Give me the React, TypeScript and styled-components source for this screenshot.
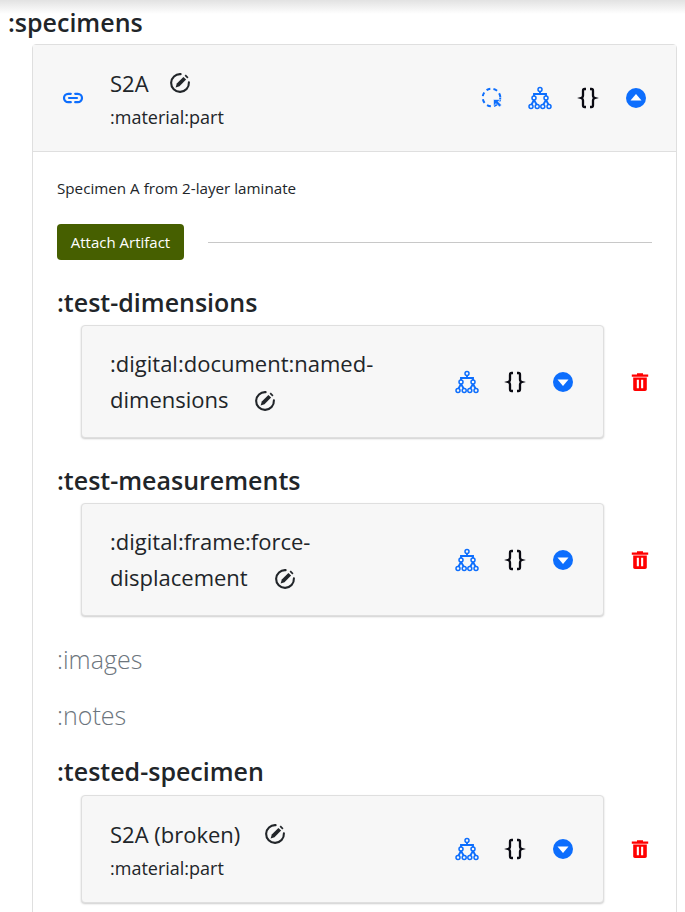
import React from "react"
import styled, { createGlobalStyle } from "styled-components"

const GlobalStyle = createGlobalStyle`
  html, body {
    margin: 0;
    height: 912px;
    overflow: hidden;
    background: #fff;
  }
  body {
    font-family: "Open Sans", "Noto Sans", sans-serif;
    color: #212529;
  }
`

const blue = "#0d6efd"

const PencilCircleIcon = () => (
  <svg width="22" height="22" viewBox="0 0 22 22" fill="none">
    <path d="M11.6 2.1A8.9 8.9 0 1 0 19.9 10.4" stroke="#212529" strokeWidth="2.1" strokeLinecap="round" />
    <path d="M6.6 15.4l1.2-3.9 6.6-6.6 2.7 2.7-6.6 6.6z" fill="#212529" />
    <path d="M15.6 3.7l1.2-1.2 2.7 2.7-1.2 1.2z" fill="#212529" />
  </svg>
)

const LinkIcon = () => (
  <svg width="22" height="22" viewBox="0 0 22 22" fill="none" stroke={blue} strokeWidth="2.2" strokeLinecap="round">
    <path d="M8.8 6.8H6.2a4.2 4.2 0 0 0 0 8.4h2.6" />
    <path d="M13.2 6.8h2.6a4.2 4.2 0 0 1 0 8.4h-2.6" />
    <path d="M7 11h8" />
  </svg>
)

const DashedArrowIcon = () => (
  <svg width="22" height="22" viewBox="0 0 22 22" fill="none">
    <circle cx="10.5" cy="10.5" r="8.8" stroke={blue} strokeWidth="2" strokeDasharray="4 3.2" />
    <path d="M12.5 12.5h7l-2.4 2.1 3.4 3.4-2 2-3.4-3.4-2.6 2.4z" fill={blue} stroke="#f7f7f7" strokeWidth="0.6" />
  </svg>
)

const TreeIcon = () => (
  <svg width="24" height="24" viewBox="0 0 24 24" fill="none" stroke={blue} strokeWidth="1.5">
    <circle cx="12" cy="3.4" r="2" />
    <circle cx="6" cy="12" r="2" />
    <circle cx="18" cy="12" r="2" />
    <circle cx="3" cy="20.4" r="2" />
    <circle cx="9.2" cy="20.4" r="2" />
    <circle cx="14.8" cy="20.4" r="2" />
    <circle cx="21" cy="20.4" r="2" />
    <path d="M12 5.4V8M6 10V8h12v2M6 14l-2.5 4.5M6 14l2.7 4.5M18 14l-2.7 4.5M18 14l2.5 4.5" strokeWidth="1.9" />
  </svg>
)

const BracesIcon = () => (
  <svg width="22" height="22" viewBox="0 0 22 22" fill="none" stroke="#0a0a12" strokeWidth="2.3">
    <path d="M9 2H7.6C6.4 2 6 2.7 6 3.7v4.7c0 1.4-.7 2.2-2 2.6 1.3.4 2 1.2 2 2.6v4.7c0 1 .4 1.7 1.6 1.7H9" />
    <path d="M13 2h1.4c1.2 0 1.6.7 1.6 1.7v4.7c0 1.4.7 2.2 2 2.6-1.3.4-2 1.2-2 2.6v4.7c0 1-.4 1.7-1.6 1.7H13" />
  </svg>
)

const CaretCircleIcon = ({ up }: { up?: boolean }) => (
  <svg width="20" height="20" viewBox="0 0 20 20">
    <circle cx="10" cy="10" r="10" fill={blue} />
    {up ? <path d="M10 6l5.5 6.5h-11z" fill="#fff" /> : <path d="M10 14L4.5 7.5h11z" fill="#fff" />}
  </svg>
)

const TrashIcon = () => (
  <svg width="18" height="18" viewBox="0 0 18 18">
    <path fillRule="evenodd" fill="#ff0000" d="M.8 1.5H6V.2h6v1.3h5.2v2.2H.8zM2.2 4.4h13.6v11.8c0 1-.7 1.7-1.7 1.7H3.9c-1 0-1.7-.7-1.7-1.7zM5.8 6.8v8.4h2.1V6.8zM10.1 6.8v8.4h2.1V6.8z" />
  </svg>
)

const Page = styled.div`
  position: relative;
  padding: 8px 8px 0;
  &::before {
    content: "";
    position: absolute;
    top: 0;
    left: 0;
    right: 0;
    height: 14px;
    background: linear-gradient(#e2e2e2, #ffffff);
  }
`

const PageHeading = styled.h2`
  position: relative;
  margin: 0;
  font-size: 25px;
  line-height: 28px;
  font-weight: 600;
`

const SpecimenCard = styled.section`
  margin: 8px 0 0 24px;
  border: 1px solid #dfdfdf;
  border-radius: 4px 4px 0 0;
`

const SpecimenHeader = styled.header`
  display: flex;
  align-items: center;
  height: 106px;
  padding: 0 28px 0 29px;
  background: #f7f7f7;
  border-bottom: 1px solid #dfdfdf;
`

const LinkSlot = styled.span`
  display: flex;
  margin-right: 26px;
`

const TitleBlock = styled.div`
  flex: 1;
  padding-top: 1px;
`

const TitleLine = styled.div<{ $gap: number }>`
  display: flex;
  align-items: center;
  gap: ${(p) => p.$gap}px;
  font-size: 22px;
  line-height: 30px;
`

const Kind = styled.div`
  margin-top: 7px;
  font-size: 18px;
  line-height: 24px;
`

const Actions = styled.div`
  display: flex;
  align-items: center;
  gap: 24px;
`

const ActionSlot = styled.span`
  display: flex;
  justify-content: center;
  align-items: center;
  width: 24px;
  height: 24px;
`

const SpecimenBody = styled.div`
  padding: 24px 24px 40px;
`

const Description = styled.p`
  margin: 0;
  font-size: 15.2px;
  line-height: 24px;
`

const AttachRow = styled.div`
  display: flex;
  align-items: center;
  gap: 24px;
  margin-top: 24px;
`

const AttachButton = styled.button`
  height: 36px;
  width: 127px;
  padding: 0;
  border: 0;
  border-radius: 4px;
  background: #465f00;
  color: #fff;
  font-family: inherit;
  font-size: 15px;
`

const Rule = styled.div`
  flex: 1;
  height: 1px;
  background: #c8c8c8;
`

const SectionHeading = styled.h3<{ $empty?: boolean }>`
  margin: 0;
  font-size: 25px;
  line-height: 28px;
  font-weight: ${(p) => (p.$empty ? 300 : 600)};
  color: ${(p) => (p.$empty ? "#6c757d" : "#212529")};
`

const Section = styled.div<{ $top: number }>`
  margin-top: ${(p) => p.$top}px;
`

const ArtifactRow = styled.div<{ $gap?: number }>`
  display: flex;
  align-items: center;
  margin: ${(p) => p.$gap ?? 9}px 0 0 24px;
`

const ArtifactCard = styled.div<{ $height: number }>`
  box-sizing: border-box;
  display: flex;
  align-items: center;
  width: 523px;
  height: ${(p) => p.$height}px;
  padding: 0 28px;
  background: #f7f7f7;
  border: 1px solid #dfdfdf;
  border-radius: 4px;
  box-shadow: 0 1px 2px rgba(0, 0, 0, 0.2);
`

const ArtifactTitle = styled.div`
  flex: 1;
  padding: 3px 20px 0 0;
  font-size: 22px;
  line-height: 36px;
`

const InlineEdit = styled.span`
  display: inline-block;
  margin-left: 26px;
  vertical-align: -4px;
`

const DeleteSlot = styled.span`
  display: flex;
  margin-left: 27px;
`

const ArtifactActions = () => (
  <Actions>
    <ActionSlot><TreeIcon /></ActionSlot>
    <ActionSlot><BracesIcon /></ActionSlot>
    <ActionSlot><CaretCircleIcon /></ActionSlot>
  </Actions>
)

export default function App() {
  return (
    <Page>
      <GlobalStyle />
      <PageHeading>:specimens</PageHeading>
      <SpecimenCard>
        <SpecimenHeader>
          <LinkSlot><LinkIcon /></LinkSlot>
          <TitleBlock>
            <TitleLine $gap={20}>S2A <PencilCircleIcon /></TitleLine>
            <Kind>:material:part</Kind>
          </TitleBlock>
          <Actions>
            <ActionSlot><DashedArrowIcon /></ActionSlot>
            <ActionSlot><TreeIcon /></ActionSlot>
            <ActionSlot><BracesIcon /></ActionSlot>
            <ActionSlot><CaretCircleIcon up /></ActionSlot>
          </Actions>
        </SpecimenHeader>
        <SpecimenBody>
          <Description>Specimen A from 2-layer laminate</Description>
          <AttachRow>
            <AttachButton>Attach Artifact</AttachButton>
            <Rule />
          </AttachRow>
          <Section $top={28}>
            <SectionHeading>:test-dimensions</SectionHeading>
            <ArtifactRow>
              <ArtifactCard $height={113}>
                <ArtifactTitle>
                  :digital:document:named-dimensions
                  <InlineEdit><PencilCircleIcon /></InlineEdit>
                </ArtifactTitle>
                <ArtifactActions />
              </ArtifactCard>
              <DeleteSlot><TrashIcon /></DeleteSlot>
            </ArtifactRow>
          </Section>
          <Section $top={28}>
            <SectionHeading>:test-measurements</SectionHeading>
            <ArtifactRow>
              <ArtifactCard $height={113}>
                <ArtifactTitle>
                  :digital:frame:force-displacement
                  <InlineEdit><PencilCircleIcon /></InlineEdit>
                </ArtifactTitle>
                <ArtifactActions />
              </ArtifactCard>
              <DeleteSlot><TrashIcon /></DeleteSlot>
            </ArtifactRow>
          </Section>
          <Section $top={29}>
            <SectionHeading $empty>:images</SectionHeading>
          </Section>
          <Section $top={28}>
            <SectionHeading $empty>:notes</SectionHeading>
          </Section>
          <Section $top={28}>
            <SectionHeading>:tested-specimen</SectionHeading>
            <ArtifactRow $gap={10}>
              <ArtifactCard $height={108}>
                <TitleBlock>
                  <TitleLine $gap={24}>S2A (broken) <PencilCircleIcon /></TitleLine>
                  <Kind>:material:part</Kind>
                </TitleBlock>
                <ArtifactActions />
              </ArtifactCard>
              <DeleteSlot><TrashIcon /></DeleteSlot>
            </ArtifactRow>
          </Section>
        </SpecimenBody>
      </SpecimenCard>
    </Page>
  )
}
